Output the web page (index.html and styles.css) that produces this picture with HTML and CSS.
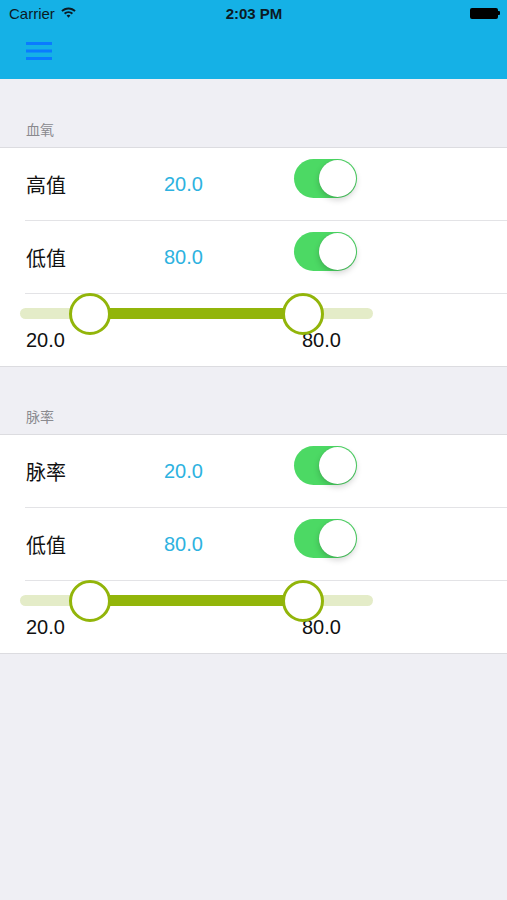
FILE: index.html
```html
<!DOCTYPE html>
<html>
<head>
<meta charset="utf-8">
<link rel="stylesheet" href="styles.css">
</head>
<body>
<div class="top">
  <div class="status">
    <div class="carrier">Carrier
      <svg class="wifi" width="15" height="11" viewBox="0 0 15 11">
        <path d="M7.5 0.5C4.6 0.5 2.1 1.6 0.3 3.4l1.3 1.4C3.1 3.3 5.2 2.4 7.5 2.4s4.4 0.9 5.9 2.4l1.3-1.4C12.9 1.6 10.4 0.5 7.5 0.5z" fill="#0b1a24"/>
        <path d="M7.5 4.2c-1.8 0-3.4 0.7-4.5 1.9l1.3 1.4c0.8-0.8 2-1.4 3.2-1.4s2.4 0.6 3.2 1.4l1.3-1.4C10.9 4.9 9.3 4.2 7.5 4.2z" fill="#0b1a24"/>
        <path d="M7.5 7.8c-0.8 0-1.4 0.3-1.9 0.8l1.9 2.1 1.9-2.1C8.9 8.1 8.3 7.8 7.5 7.8z" fill="#0b1a24"/>
      </svg>
    </div>
    <div class="time">2:03 PM</div>
    <div class="battery"><span class="cell"></span><span class="nub"></span></div>
  </div>
  <div class="nav">
    <svg class="menu" width="26" height="20" viewBox="0 0 26 20">
      <rect x="0" y="1" width="26" height="3" fill="#0a7bff"/>
      <rect x="0" y="8.5" width="26" height="3" fill="#0a7bff"/>
      <rect x="0" y="16" width="26" height="3" fill="#0a7bff"/>
    </svg>
  </div>
</div>

<div class="content">
  <div class="section-header">血氧</div>
  <div class="group">
    <div class="row sep">
      <span class="label">高值</span>
      <span class="value">20.0</span>
      <span class="toggle"><span class="knob"></span></span>
    </div>
    <div class="row sep">
      <span class="label">低值</span>
      <span class="value">80.0</span>
      <span class="toggle"><span class="knob"></span></span>
    </div>
    <div class="slider-row">
      <div class="slider">
        <div class="track"></div>
        <div class="range" style="left:70px;width:213px"></div>
        <div class="thumb" style="left:49px"></div>
        <div class="thumb" style="left:262px"></div>
      </div>
      <div class="slider-labels"><span class="min">20.0</span><span>80.0</span></div>
    </div>
  </div>

  <div class="section-header second">脉率</div>
  <div class="group">
    <div class="row sep">
      <span class="label">脉率</span>
      <span class="value">20.0</span>
      <span class="toggle"><span class="knob"></span></span>
    </div>
    <div class="row sep">
      <span class="label">低值</span>
      <span class="value">80.0</span>
      <span class="toggle"><span class="knob"></span></span>
    </div>
    <div class="slider-row">
      <div class="slider">
        <div class="track"></div>
        <div class="range" style="left:70px;width:213px"></div>
        <div class="thumb" style="left:49px"></div>
        <div class="thumb" style="left:262px"></div>
      </div>
      <div class="slider-labels"><span class="min">20.0</span><span>80.0</span></div>
    </div>
  </div>
</div>
</body>
</html>
```

FILE: styles.css
```css
html, body {
  margin: 0;
  padding: 0;
}
body {
  width: 507px;
  height: 900px;
  background: #efeff4;
  font-family: "Liberation Sans", "Noto Sans CJK SC", sans-serif;
  overflow: hidden;
}
.top {
  background: #15b1e6;
  height: 79px;
  display: flex;
  flex-direction: column;
}
.status {
  height: 26px;
  display: grid;
  grid-template-columns: 1fr auto 1fr;
  align-items: center;
  color: #0b1a24;
  font-size: 15px;
}
.carrier {
  padding-left: 9px;
  display: flex;
  align-items: center;
  gap: 6px;
  padding-top: 1px;
}
.wifi {
  margin-top: -2px;
}
.time {
  font-weight: bold;
  padding-top: 1px;
  padding-left: 1px;
}
.battery {
  justify-self: end;
  margin-right: 7px;
  display: flex;
  align-items: center;
}
.cell {
  width: 28px;
  height: 11px;
  background: #000;
  border-radius: 2px;
}
.nub {
  width: 2px;
  height: 4px;
  background: #000;
  border-radius: 0 1px 1px 0;
}
.nav {
  flex: 1;
  display: flex;
  align-items: flex-start;
  padding-left: 26px;
  padding-top: 15px;
}
.content {
  background: #efeff4;
}
.section-header {
  height: 68px;
  box-sizing: border-box;
  display: flex;
  align-items: flex-end;
  padding: 0 0 8px 26px;
  font-size: 14px;
  color: #8a8a8f;
}
.section-header.second {
  height: 67px;
}
.group {
  background: #fff;
  border-top: 1px solid #dcdce0;
  border-bottom: 1px solid #dcdce0;
}
.row {
  height: 73px;
  box-sizing: border-box;
  margin-left: 25px;
  display: grid;
  grid-template-columns: 139px 130px 63px;
  align-items: center;
}
.row.sep {
  border-bottom: 1px solid #e3e3e6;
}
.label {
  padding-left: 1px;
  font-size: 20px;
  color: #111;
  padding-top: 1px;
}
.value {
  font-size: 20px;
  color: #2db2e0;
  padding-top: 1px;
}
.toggle {
  align-self: start;
  margin-top: 11px;
  width: 63px;
  height: 39px;
  border-radius: 20px;
  background: #4cd964;
  position: relative;
}
.knob {
  position: absolute;
  right: 1px;
  top: 1px;
  width: 37px;
  height: 37px;
  border-radius: 50%;
  background: #fff;
  box-shadow: 0 3px 6px rgba(0,0,0,0.18), 0 0 1px rgba(0,0,0,0.2);
}
.slider-row {
  height: 73px;
  box-sizing: border-box;
  padding-top: 0;
}
.slider {
  position: relative;
  margin-left: 20px;
  width: 353px;
  height: 42px;
  margin-top: -1px;
}
.track {
  position: absolute;
  left: 0;
  right: 0;
  top: 15px;
  height: 11px;
  border-radius: 6px;
  background: #e4ecc8;
}
.range {
  position: absolute;
  top: 15px;
  height: 11px;
  background: #92b50a;
}
.thumb {
  position: absolute;
  top: 0;
  width: 42px;
  height: 42px;
  box-sizing: border-box;
  border-radius: 50%;
  border: 3.5px solid #92b50a;
  background: #fff;
}
.slider-labels {
  display: flex;
  padding-left: 26px;
  font-size: 20px;
  color: #111;
  margin-top: -6px;
}
.slider-labels .min {
  width: 276px;
}
```
